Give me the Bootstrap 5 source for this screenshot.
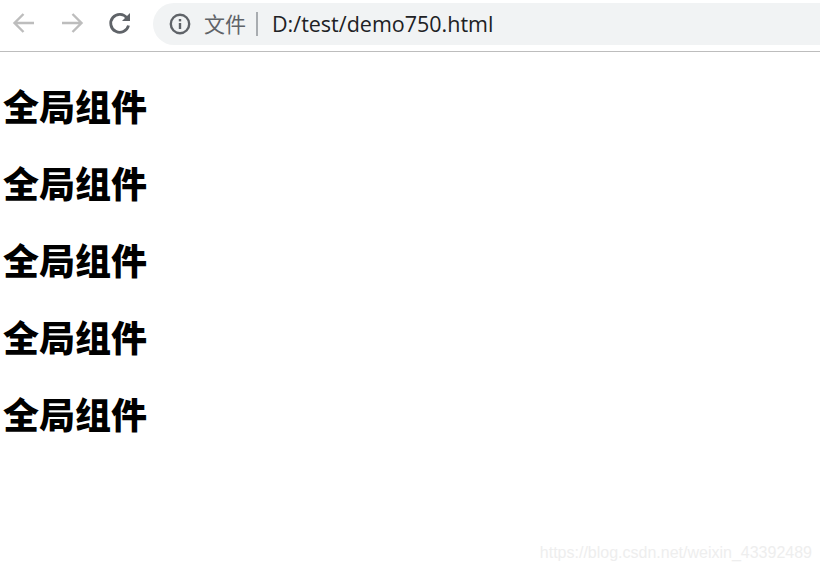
<!DOCTYPE html>
<html lang="zh-CN">
<head>
    <meta charset="UTF-8">
    <meta name="viewport" content="width=device-width, initial-scale=1.0">
    <title>demo750</title>
    <link href="https://cdn.jsdelivr.net/npm/bootstrap@5.3.0/dist/css/bootstrap.min.css" rel="stylesheet">
    <style>
        html, body {
            height: 100%;
        }
        body {
            background: #fff;
            overflow: hidden;
            position: relative;
        }
        .toolbar {
            height: 52px;
            border-bottom: 1px solid #bdbdbd;
            padding: 3px 0 0 11px;
        }
        .tool-icon {
            width: 26px;
            height: 26px;
            flex: none;
            margin-top: 7px;
        }
        .tool-gap {
            margin-right: 22px;
        }
        .tool-gap-last {
            margin-right: 20px;
        }
        .address {
            height: 42px;
            flex: 1;
            background: #f1f3f4;
            border-radius: 21px 0 0 21px;
            padding-left: 16px;
            font-size: 21px;
            white-space: nowrap;
        }
        .scheme {
            font-family: "Noto Sans CJK SC", sans-serif;
            color: #5f6368;
            margin-left: 13px;
            line-height: 1;
            position: relative;
            top: -1px;
        }
        .divider {
            width: 2px;
            height: 24px;
            background: #a8acb0;
            margin: 0 14px 0 10px;
        }
        .url-text {
            font-family: "Open Sans", sans-serif;
            color: #202124;
            font-size: 21.5px;
        }
        .heading-row {
            font-family: "Noto Sans CJK SC", sans-serif;
            font-weight: 900;
            font-size: 36px;
            line-height: 44px;
            color: #000;
            margin: 0 0 33px 3px;
        }
        .heading-list {
            padding-top: 31px;
        }
        .watermark {
            position: absolute;
            right: 8px;
            bottom: 8px;
            font-family: "Liberation Sans", sans-serif;
            font-size: 16px;
            line-height: 20px;
            color: #eeeeee;
        }
    </style>
</head>
<body>
    <div class="toolbar d-flex align-items-start">
        <svg class="tool-icon tool-gap" viewBox="0 0 26 26" fill="none" stroke="#bdbdbd" stroke-width="2.4">
            <path d="M23 13H4M12.500 4L3.500 13l9 9"/>
        </svg>
        <svg class="tool-icon tool-gap" viewBox="0 0 26 26" fill="none" stroke="#bdbdbd" stroke-width="2.4">
            <path d="M3 13h19M13.500 4l9 9-9 9"/>
        </svg>
        <svg class="tool-icon tool-gap-last" viewBox="0 0 26 26" fill="none">
            <path d="M20 8A9 9 0 1 0 21.500 15.500" stroke="#5f6368" stroke-width="2.800"/>
            <path d="M15 11h8V3z" fill="#5f6368"/>
        </svg>
        <div class="address d-flex align-items-center">
            <svg width="22" height="22" viewBox="0 0 22 22" fill="none">
                <circle cx="11" cy="11" r="9.200" stroke="#5f6368" stroke-width="2.400"/>
                <rect x="9.800" y="10" width="2.400" height="6" fill="#5f6368"/>
                <rect x="9.800" y="6" width="2.400" height="2.400" fill="#5f6368"/>
            </svg>
            <span class="scheme">文件</span>
            <span class="divider"></span>
            <span class="url-text">D:/test/demo750.html</span>
        </div>
    </div>
    <div class="heading-list">
        <h3 class="heading-row">全局组件</h3>
        <h3 class="heading-row">全局组件</h3>
        <h3 class="heading-row">全局组件</h3>
        <h3 class="heading-row">全局组件</h3>
        <h3 class="heading-row">全局组件</h3>
    </div>
    <div class="watermark">https://blog.csdn.net/weixin_43392489</div>
    <script src="https://cdn.jsdelivr.net/npm/bootstrap@5.3.0/dist/js/bootstrap.bundle.min.js"></script>
</body>
</html>
